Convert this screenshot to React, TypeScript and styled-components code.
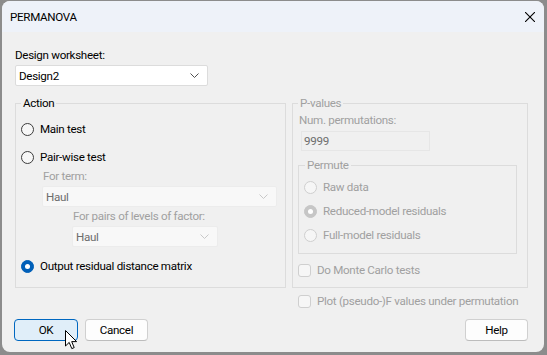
import React from 'react';
import styled, { createGlobalStyle } from 'styled-components';

const Global = createGlobalStyle`
  html, body {
    margin: 0;
    padding: 0;
    background: #8c8c8c;
    width: 547px;
    height: 355px;
    overflow: hidden;
  }
  body {
    font-family: Roboto, "Liberation Sans", Arial, sans-serif;
    font-size: 11.6px;
    letter-spacing: -0.3px;
    color: #000;
  }
`;

const Window = styled.div`
  margin: 1px 0 0 2px;
  width: 542px;
  height: 351px;
  border-radius: 8px;
  overflow: hidden;
  background: #f0f0f0;
  display: flex;
  flex-direction: column;
  position: relative;
`;

const TitleBar = styled.div`
  height: 31px;
  background: #eef2f9;
  display: flex;
  align-items: center;
  padding-left: 8px;
  flex-shrink: 0;
`;

const Title = styled.span`
  font-size: 11.6px;
  padding-top: 1px;
`;

const Close = styled.svg`
  margin-left: auto;
  margin-right: 9px;
  margin-top: 1px;
`;

const Content = styled.div`
  padding: 0 15px 0 13px;
  display: flex;
  flex-direction: column;
`;

const Label = styled.div<{ $disabled?: boolean; $indent?: number; $top?: number }>`
  line-height: 14px;
  height: 14px;
  color: ${(p) => (p.$disabled ? '#a0a0a0' : '#000')};
  margin-left: ${(p) => p.$indent ?? 0}px;
  margin-top: ${(p) => p.$top ?? 0}px;
  white-space: nowrap;
`;

const Select = styled.div<{ $w: number; $disabled?: boolean; $indent?: number; $top?: number }>`
  box-sizing: border-box;
  width: ${(p) => p.$w}px;
  height: 21px;
  margin-left: ${(p) => p.$indent ?? 0}px;
  margin-top: ${(p) => p.$top ?? 0}px;
  background: ${(p) => (p.$disabled ? '#f8f8f8' : '#fff')};
  border: 1px solid ${(p) => (p.$disabled ? '#ececec' : '#dcdcdc')};
  border-radius: 2px;
  display: flex;
  align-items: center;
  padding: 0 8px 0 3px;
  color: ${(p) => (p.$disabled ? '#6d6d6d' : '#000')};
  line-height: 14px;
`;

const Chevron = styled.svg`
  margin-left: auto;
`;

const Groups = styled.div`
  display: grid;
  grid-template-columns: 271px 236px;
  column-gap: 6px;
  margin-top: 10px;
`;

const Group = styled.fieldset<{ $h: number; $pad: number }>`
  box-sizing: border-box;
  margin: 0;
  padding: 0 0 0 ${(p) => p.$pad}px;
  height: ${(p) => p.$h}px;
  border: 1px solid #dcdcdc;
  border-radius: 0;
  min-width: 0;
  display: flex;
  flex-direction: column;
`;

const Legend = styled.legend<{ $disabled?: boolean }>`
  padding: 0 2px;
  margin-left: ${(p) => (p.$disabled ? 1 : 0)}px;
  line-height: 14px;
  color: ${(p) => (p.$disabled ? '#a0a0a0' : '#000')};
`;

const Column = styled.div`
  display: flex;
  flex-direction: column;
`;

const OptionRow = styled.div<{ $top: number; $indent?: number; $disabled?: boolean }>`
  display: flex;
  align-items: center;
  height: 20px;
  gap: 6px;
  margin-top: ${(p) => p.$top}px;
  margin-left: ${(p) => p.$indent ?? 0}px;
  color: ${(p) => (p.$disabled ? '#a0a0a0' : '#000')};
  white-space: nowrap;
`;

const RadioDot = styled.span<{ $checked?: boolean; $disabled?: boolean }>`
  box-sizing: border-box;
  width: 13px;
  height: 13px;
  border-radius: 50%;
  flex-shrink: 0;
  display: flex;
  align-items: center;
  justify-content: center;
  border: 1px solid
    ${(p) => (p.$checked ? (p.$disabled ? '#c6c6c6' : '#005fb8') : p.$disabled ? '#cfcfcf' : '#3c3c3c')};
  background: ${(p) => (p.$checked ? (p.$disabled ? '#c6c6c6' : '#005fb8') : p.$disabled ? '#f6f6f6' : '#f7f7f7')};
  &::after {
    content: '';
    display: ${(p) => (p.$checked ? 'block' : 'none')};
    width: 5px;
    height: 5px;
    border-radius: 50%;
    background: #fff;
  }
`;

const CheckBox = styled.span`
  box-sizing: border-box;
  width: 13px;
  height: 13px;
  border-radius: 3px;
  border: 1px solid #cfcfcf;
  background: #f6f6f6;
  flex-shrink: 0;
`;

const NumInput = styled.div`
  box-sizing: border-box;
  width: 129px;
  height: 20px;
  margin: 4px 0 0 4px;
  border: 1px solid #e6e6e6;
  background: #f0f0f0;
  color: #6d6d6d;
  display: flex;
  align-items: center;
  padding-left: 2px;
`;

const ButtonRow = styled.div`
  display: flex;
  gap: 7px;
  margin-top: 8px;
  position: relative;
`;

const Button = styled.button<{ $w: number; $primary?: boolean; $right?: boolean }>`
  box-sizing: border-box;
  width: ${(p) => p.$w}px;
  height: 22px;
  border-radius: 4px;
  font-family: inherit;
  font-size: 11.6px;
  letter-spacing: inherit;
  color: #000;
  padding: 0;
  border: 1px solid ${(p) => (p.$primary ? '#0067c0' : '#d0d0d0')};
  border-bottom-color: ${(p) => (p.$primary ? '#0067c0' : '#bcbcbc')};
  background: ${(p) => (p.$primary ? '#e0eef9' : '#fdfdfd')};
  margin-left: ${(p) => (p.$right ? 'auto' : '0')};
  margin-right: ${(p) => (p.$right ? '1px' : '0')};
`;

const Cursor = styled.svg`
  position: absolute;
  left: 50px;
  top: 11px;
`;

const Radio = ({ label, checked, disabled, top, indent }: { label: string; checked?: boolean; disabled?: boolean; top: number; indent?: number }) => (
  <OptionRow $top={top} $indent={indent} $disabled={disabled}>
    <RadioDot $checked={checked} $disabled={disabled} />
    <span>{label}</span>
  </OptionRow>
);

const Check = ({ label, top, indent }: { label: string; top: number; indent?: number }) => (
  <OptionRow $top={top} $indent={indent} $disabled>
    <CheckBox />
    <span>{label}</span>
  </OptionRow>
);

const Arrow = ({ color }: { color: string }) => (
  <Chevron width="9" height="5" viewBox="0 0 9 5">
    <path d="M0.5 0.5 L4.5 4.5 L8.5 0.5" fill="none" stroke={color} strokeWidth="1" />
  </Chevron>
);

export default function App() {
  return (
    <>
      <Global />
      <Window>
        <TitleBar>
          <Title>PERMANOVA</Title>
          <Close width="10" height="10" viewBox="0 0 10 10">
            <path d="M0 0 L10 10 M10 0 L0 10" stroke="#000" strokeWidth="1.1" />
          </Close>
        </TitleBar>
        <Content>
          <Label $top={16}>Design worksheet:</Label>
          <Select $w={193} $top={3}>
            Design2
            <Arrow color="#505050" />
          </Select>
          <Groups>
            <Group $h={192} $pad={5}>
              <Legend>Action</Legend>
              <Radio label="Main test" top={9} />
              <Radio label="Pair-wise test" top={8} />
              <Label $disabled $indent={22} $top={2}>For term:</Label>
              <Select $w={235} $disabled $indent={21} $top={3}>
                Haul
                <Arrow color="#c8c8c8" />
              </Select>
              <Label $disabled $indent={52} $top={2}>For pairs of levels of factor:</Label>
              <Select $w={146} $disabled $indent={51} $top={3}>
                Haul
                <Arrow color="#c8c8c8" />
              </Select>
              <Radio label="Output residual distance matrix" checked top={9} />
            </Group>
            <Column>
              <Group $h={192} $pad={4}>
                <Legend $disabled>P-values</Legend>
                <Label $disabled $indent={2} $top={3}>Num. permutations:</Label>
                <NumInput>9999</NumInput>
                <Group $h={96} $pad={5} style={{ width: 219, marginTop: 7, marginLeft: 1 }}>
                  <Legend $disabled>Permute</Legend>
                  <Radio label="Raw data" disabled top={5} />
                  <Radio label="Reduced-model residuals" disabled checked top={4} />
                  <Radio label="Full-model residuals" disabled top={4} />
                </Group>
                <Check label="Do Monte Carlo tests" top={6} indent={1} />
              </Group>
              <Check label="Plot (pseudo-)F values under permutation" top={3} indent={6} />
            </Column>
          </Groups>
          <ButtonRow>
            <Button $w={64} $primary style={{ marginLeft: -1 }}>OK</Button>
            <Button $w={63}>Cancel</Button>
            <Button $w={63} $right>Help</Button>
            <Cursor width="13" height="20" viewBox="0 0 13 20">
              <path d="M0.5 0.5 L0.5 16 L4.2 12.4 L6.8 18.6 L9.2 17.6 L6.7 11.6 L11.6 11.6 Z" fill="#fff" stroke="#000" strokeWidth="1" strokeLinejoin="round" />
            </Cursor>
          </ButtonRow>
        </Content>
      </Window>
    </>
  );
}
